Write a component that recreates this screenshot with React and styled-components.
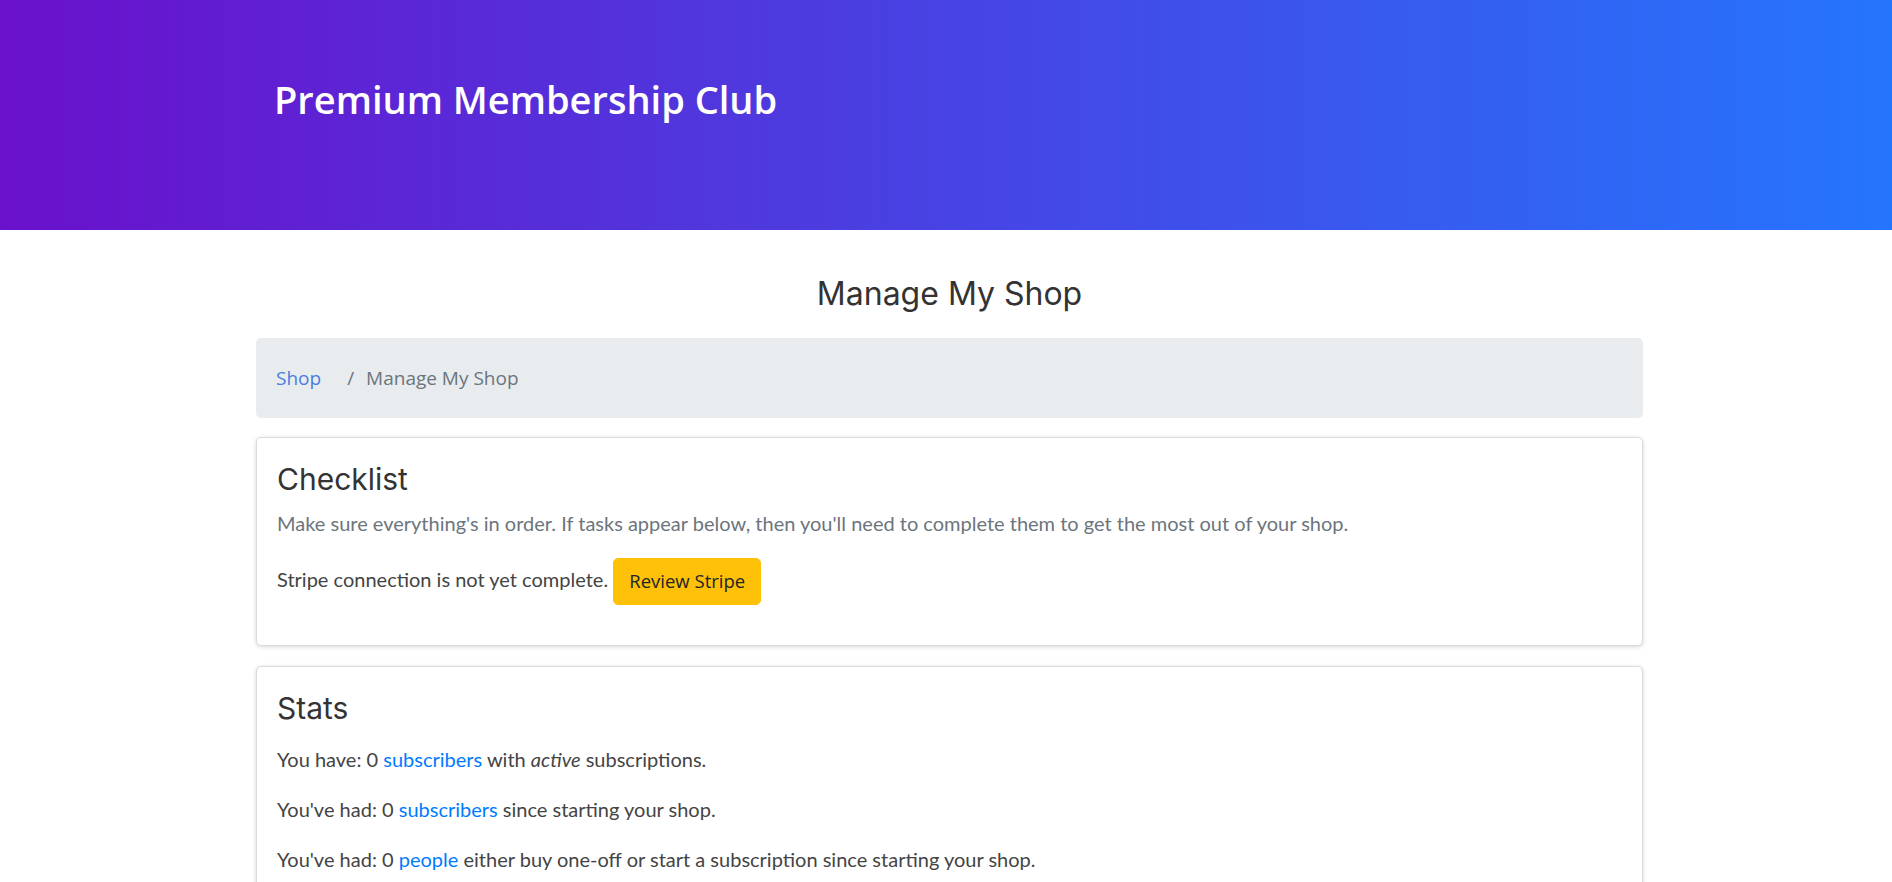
import styled, { createGlobalStyle } from "styled-components";

const GlobalStyle = createGlobalStyle`
  body {
    margin: 0;
    background: #fff;
    font-family: "Lato", "Open Sans", sans-serif;
    font-size: 20px;
    color: #444;
  }
  * {
    box-sizing: border-box;
  }
`;

const Hero = styled.header`
  height: 230px;
  background: linear-gradient(to right, #6a11cb 0%, #2575fc 100%);
`;

const HeroInner = styled.div`
  width: 1387px;
  margin-left: calc(50% - 690px);
  padding: 77px 18px 0;
`;

const SiteTitle = styled.h1`
  margin: 0;
  font-family: "Open Sans", "Noto Sans", sans-serif;
  font-weight: 600;
  font-size: 38px;
  line-height: 1.2;
  color: #fff;
`;

const Page = styled.main`
  width: 1387px;
  margin-left: calc(50% - 690px);
`;

const PageTitle = styled.h2`
  margin: 45px 0 25px;
  text-align: center;
  font-family: "Inter", "Roboto", sans-serif;
  font-weight: 400;
  font-size: 32px;
  line-height: 1.2;
  color: #333;
`;

const Crumbs = styled.nav`
  display: flex;
  align-items: center;
  height: 80px;
  padding: 0 20px;
  margin-bottom: 19px;
  background: #e9ecef;
  border-radius: 5px;
  font-family: "Open Sans", "Noto Sans", sans-serif;
  font-size: 19px;
  color: #6c757d;
`;

const CrumbLink = styled.a`
  color: #4a7de0;
  text-decoration: none;
`;

const Sep = styled.span`
  padding: 0 12px 0 26px;
`;

const Card = styled.section`
  background: #fff;
  border: 1px solid #dcdcdc;
  border-radius: 5px;
  box-shadow: 0 1px 4px rgba(0, 0, 0, 0.16);
  padding: 20px;
  margin-bottom: 20px;
`;

const CardTitle = styled.h3`
  margin: 0 0 15px;
  font-family: "Inter", "Roboto", sans-serif;
  font-weight: 400;
  font-size: 30px;
  line-height: 42px;
  color: #333;
`;

const Text = styled.p`
  margin: ${(p) => (p.$sub ? "-7.5px 0 20px" : "0 0 20px")};
  line-height: 30px;
  color: ${(p) => (p.$sub ? "#6c757d" : "#444")};
`;

const Link = styled.a`
  color: #007bff;
  text-decoration: none;
`;

const WarnButton = styled.button`
  display: inline-block;
  vertical-align: middle;
  padding: 7.5px 15px;
  border: 1px solid #ffc107;
  border-radius: 5px;
  background: #ffc107;
  color: #212529;
  font-family: "Open Sans", "Noto Sans", sans-serif;
  font-size: 18.5px;
  line-height: 30px;
  cursor: pointer;
`;

export default function App() {
  return (
    <>
      <GlobalStyle />
      <Hero>
        <HeroInner>
          <SiteTitle>Premium Membership Club</SiteTitle>
        </HeroInner>
      </Hero>
      <Page>
        <PageTitle>Manage My Shop</PageTitle>
        <Crumbs>
          <CrumbLink href="#">Shop</CrumbLink>
          <Sep>/</Sep>
          <span>Manage My Shop</span>
        </Crumbs>
        <Card>
          <CardTitle>Checklist</CardTitle>
          <Text $sub>
            Make sure everything's in order. If tasks appear below, then you'll
            need to complete them to get the most out of your shop.
          </Text>
          <Text>
            Stripe connection is not yet complete.{" "}
            <WarnButton>Review Stripe</WarnButton>
          </Text>
        </Card>
        <Card>
          <CardTitle>Stats</CardTitle>
          <Text>
            You have: 0 <Link href="#">subscribers</Link> with <em>active</em>{" "}
            subscriptions.
          </Text>
          <Text>
            You've had: 0 <Link href="#">subscribers</Link> since starting your
            shop.
          </Text>
          <Text>
            You've had: 0 <Link href="#">people</Link> either buy one-off or
            start a subscription since starting your shop.
          </Text>
        </Card>
      </Page>
    </>
  );
}
